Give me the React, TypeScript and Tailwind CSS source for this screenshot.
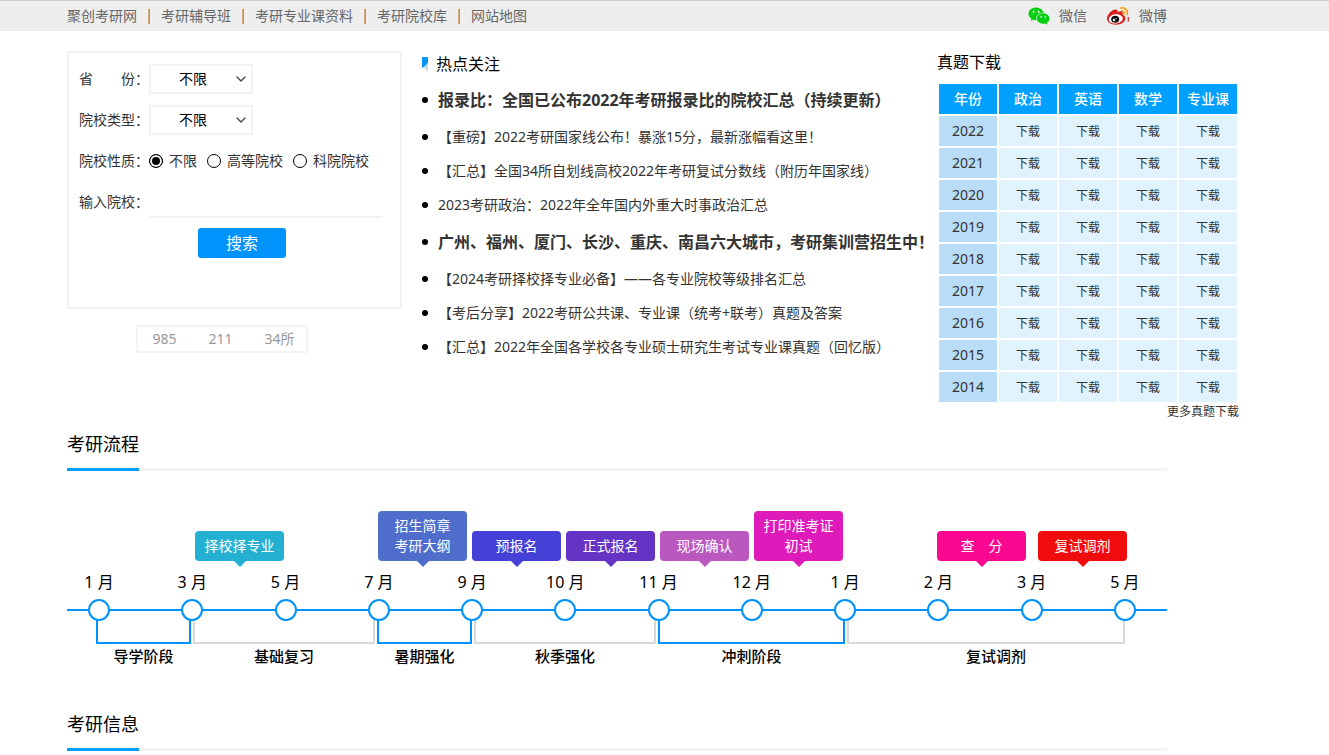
import clsx from 'clsx';
import { ChevronDown } from 'lucide-react';
import { AiFillWechat } from 'react-icons/ai';

const navLinks = ['聚创考研网', '考研辅导班', '考研专业课资料', '考研院校库', '网站地图'];

const schoolKinds = ['不限', '高等院校', '科院院校'];

const hotTopics = [
  { title: '报录比：全国已公布2022年考研报录比的院校汇总（持续更新）', top: true },
  { title: '【重磅】2022考研国家线公布！暴涨15分，最新涨幅看这里！' },
  { title: '【汇总】全国34所自划线高校2022年考研复试分数线（附历年国家线）' },
  { title: '2023考研政治：2022年全年国内外重大时事政治汇总' },
  { title: '广州、福州、厦门、长沙、重庆、南昌六大城市，考研集训营招生中！', top: true },
  { title: '【2024考研择校择专业必备】——各专业院校等级排名汇总' },
  { title: '【考后分享】2022考研公共课、专业课（统考+联考）真题及答案' },
  { title: '【汇总】2022年全国各学校各专业硕士研究生考试专业课真题（回忆版）' },
];

const subjects = ['政治', '英语', '数学', '专业课'];
const years = [2022, 2021, 2020, 2019, 2018, 2017, 2016, 2015, 2014];

const milestones = [
  { lines: ['择校择专业'], className: 'ml-32 text-[#24b1d1]' },
  { lines: ['招生简章', '考研大纲'], className: 'ml-[94px] text-[#4f6ecb]' },
  { lines: ['预报名'], className: 'ml-[5px] text-[#4540d6]' },
  { lines: ['正式报名'], className: 'ml-[5px] text-[#6534c4]' },
  { lines: ['现场确认'], className: 'ml-[5px] text-[#bb58c0]' },
  { lines: ['打印准考证', '初试'], className: 'ml-[5px] text-[#de1aba]' },
  { lines: ['查　分'], className: 'ml-[94px] text-[#fb0891]' },
  { lines: ['复试调剂'], className: 'ml-3 text-[#f00c0c]' },
];

const months = [1, 3, 5, 7, 9, 10, 11, 12, 1, 2, 3, 5];

const phases = [
  { name: '导学阶段', className: 'w-[95px]', active: true },
  { name: '基础复习', className: 'w-[182px]' },
  { name: '暑期强化', className: 'w-[95px]', active: true },
  { name: '秋季强化', className: 'w-[182px]' },
  { name: '冲刺阶段', className: 'w-[187px]', active: true },
  { name: '复试调剂', className: 'w-[278px]', labelClassName: 'pl-5' },
];

function WeiboIcon() {
  return (
    <svg viewBox="0 0 22 18" className="h-[18px] w-[22px]" aria-hidden="true">
      <path
        d="M8.400 2.400C5.300 2.200 0 7.200 0 11.600c0 3.900 4.200 6.200 9 6.200 5.700 0 9.400-3.300 9.400-6.500 0-2-1.300-3.100-2.800-3.500.6-1.900.2-3.200-1.200-3.500-1.100-.2-2.400.1-3.700.7.3-1.700-.3-2.500-2.300-2.600z"
        fill="#d81e1e"
      />
      <ellipse cx="8.800" cy="11.900" rx="7.100" ry="4.600" fill="#fff" transform="rotate(-6 8.800 11.900)" />
      <ellipse cx="8.200" cy="12.200" rx="4" ry="3.500" fill="#111" />
      <circle cx="7" cy="13" r="1.200" fill="#fff" />
      <circle cx="9.200" cy="11.500" r="0.600" fill="#fff" />
      <path d="M13.800 1c4.100-.9 7.400 2.500 6.500 6.600" fill="none" stroke="#f5a01a" strokeWidth="1.700" strokeLinecap="round" />
      <path d="M14.400 3.800c2-.4 3.500 1.200 3 3.100" fill="none" stroke="#f5a01a" strokeWidth="1.400" strokeLinecap="round" />
      <path d="M21.300 10v4.500" stroke="#e02020" strokeWidth="1.200" />
    </svg>
  );
}

function TopBar() {
  return (
    <header className="border-t border-[#ccc] bg-[#eee]">
      <div className="mx-auto max-w-[1195px] text-sm leading-[30px] text-[#666]">
        <div className="flex max-w-[1100px] items-center justify-between">
          <nav className="flex items-center">
            {navLinks.map((name, i) => (
              <div key={name} className="flex items-center">
                {i > 0 && <span className="mx-[11px] h-[15px] w-[2px] border-l border-[#d5a57a] bg-[#a09a94]" />}
                <a href="#">{name}</a>
              </div>
            ))}
          </nav>
          <div className="flex items-center gap-5">
            <a href="#" className="flex items-center gap-2">
              <AiFillWechat className="size-6 text-[#08cf13]" />
              微信
            </a>
            <a href="#" className="flex items-center gap-[10px]">
              <WeiboIcon />
              微博
            </a>
          </div>
        </div>
      </div>
    </header>
  );
}

function SelectField({ id, label }: { id: string; label: string }) {
  return (
    <div className="flex h-[41px] items-center">
      <label htmlFor={id} className="w-[70px]">{label}</label>
      <div className="relative">
        <select
          id={id}
          className="block h-[30px] w-[104px] appearance-none border-2 border-[#f3f3f3] bg-white pl-7 text-sm leading-5 text-black outline-none"
        >
          <option>不限</option>
        </select>
        <ChevronDown className="pointer-events-none absolute top-[7px] right-1 size-4 text-[#444]" strokeWidth={2} />
      </div>
    </div>
  );
}

function SchoolSearch() {
  return (
    <div className="w-[335px] shrink-0">
      <form className="border-2 border-[#f3f3f3] px-[10px] pt-[5px] pb-[49px] text-sm leading-5 text-[#333]">
        <SelectField id="province" label="省　　份：" />
        <SelectField id="type" label="院校类型：" />

        <fieldset className="flex h-[41px] items-center">
          <legend className="float-left w-[70px]">院校性质：</legend>
          <div className="flex gap-[10px]">
            {schoolKinds.map((kind, i) => (
              <label key={kind} className="flex items-center gap-[6px]">
                <input
                  type="radio"
                  name="kind"
                  defaultChecked={i === 0}
                  className="size-[14px] appearance-none rounded-full border border-black bg-white checked:bg-black checked:shadow-[inset_0_0_0_2px_white]"
                />
                {kind}
              </label>
            ))}
          </div>
        </fieldset>

        <div className="flex h-[41px] items-center">
          <label htmlFor="school" className="w-[70px]">输入院校：</label>
          <input id="school" type="text" className="h-8 w-[233px] border-b-2 border-[#f3f3f3] outline-none" />
        </div>

        <button type="button" className="mt-[6px] ml-[119px] block h-[30px] w-[88px] rounded-[3px] bg-[#0093fb] text-base text-white">
          搜索
        </button>
      </form>

      <div className="mt-4 ml-[69px] flex h-7 w-[172px] items-center justify-center gap-8 border-2 border-[#f3f3f3] pl-[3px] text-sm leading-5 text-[#999]">
        <a href="#">985</a>
        <a href="#">211</a>
        <a href="#">34所</a>
      </div>
    </div>
  );
}

function HotTopics() {
  return (
    <section className="ml-5 flex-1 whitespace-nowrap">
      <h2 className="mb-[3px] flex items-center gap-2 text-base leading-[26px] text-black">
        <svg viewBox="0 0 6 15" className="h-[15px] w-[6px]" aria-hidden="true">
          <path d="M6 7v8L1.500 10z" fill="#c9dbe6" />
          <path d="M1 0h4a1 1 0 0 1 1 1v3.500C6 7 3 9 0 11V1a1 1 0 0 1 1-1z" fill="#0093fb" />
        </svg>
        热点关注
      </h2>
      <ul>
        {hotTopics.map((topic) => (
          <li
            key={topic.title}
            className={clsx(
              'flex items-center gap-[10px] text-[#333] before:size-[6px] before:rounded-full before:bg-black',
              topic.top ? 'text-base leading-10 font-bold' : 'text-sm leading-[34px]',
            )}
          >
            <a href="#">{topic.title}</a>
          </li>
        ))}
      </ul>
    </section>
  );
}

function PaperDownloads() {
  return (
    <section className="w-[302px] shrink-0">
      <h2 className="mb-[9px] text-base leading-[22px] text-black">真题下载</h2>
      <table className="w-full table-fixed border-separate border-spacing-[2px] text-center text-[#333]">
        <thead>
          <tr className="text-sm leading-[30px] text-white">
            <th className="bg-[#00a0ff] p-0 font-medium">年份</th>
            {subjects.map((subject) => (
              <th key={subject} className="bg-[#00a0ff] p-0 font-medium">{subject}</th>
            ))}
          </tr>
        </thead>
        <tbody>
          {years.map((year) => (
            <tr key={year}>
              <td className="bg-[#b9ddf6] p-0 text-sm leading-[30px]">{year}</td>
              {subjects.map((subject) => (
                <td key={subject} className="bg-[#e1f3ff] p-0 pt-[2px] text-xs leading-7">
                  <a href="#" className="block">下载</a>
                </td>
              ))}
            </tr>
          ))}
        </tbody>
      </table>
      <a href="#" className="block text-right text-xs leading-4 text-[#333]">更多真题下载</a>
    </section>
  );
}

function SectionTitle({ children }: { children: string }) {
  return (
    <div className="flex border-b-[3px] border-[#f3f3f3]">
      <h2 className="-mb-[3px] border-b-[3px] border-[#00a0ff] text-lg leading-[48px] text-black">{children}</h2>
    </div>
  );
}

function Timeline() {
  return (
    <div className="pt-10 whitespace-nowrap">
      <ul className="flex items-end">
        {milestones.map(({ lines, className }) => (
          <li key={lines[0]} className={clsx('flex flex-col items-center', className)}>
            <div className="w-[89px] rounded bg-current py-[5px] text-center text-sm leading-5">
              {lines.map((line) => (
                <p key={line} className="text-white">{line}</p>
              ))}
            </div>
            <span className="border-x-[6px] border-t-[6px] border-x-transparent border-t-current" />
          </li>
        ))}
      </ul>

      <ol className="relative z-10 mt-[3px] -mb-3 flex justify-between pr-[18px] pl-2">
        {months.map((month, i) => (
          <li key={i} className="flex w-12 flex-col items-center gap-[5px] text-base leading-6 text-black">
            {month} 月
            <span className="size-[22px] rounded-full border-2 border-[#0093fb] bg-white" />
          </li>
        ))}
      </ol>

      {/* Axis line with the phase brackets hanging from it */}
      <ul className="flex gap-[2px] border-t-2 border-[#0093fb] pl-[29px]">
        {phases.map(({ name, className, labelClassName, active }) => (
          <li key={name} className={clsx('text-center text-[15px] leading-6 font-medium text-black', className)}>
            <div className={clsx('h-[33px] border-x-2 border-b-2', active ? 'border-[#0093fb]' : 'border-[#d9d9d9]')} />
            <p className={labelClassName}>{name}</p>
          </li>
        ))}
      </ul>
    </div>
  );
}

export default function App() {
  return (
    <div className="min-h-screen bg-white font-['Noto_Sans','Noto_Sans_CJK_SC',sans-serif]">
      <TopBar />
      <main className="mx-auto max-w-[1195px]">
        <div className="flex items-start pt-5 pr-[23px]">
          <SchoolSearch />
          <HotTopics />
          <PaperDownloads />
        </div>

        <section className="max-w-[1100px]">
          <SectionTitle>考研流程</SectionTitle>
          <Timeline />
        </section>

        <section className="mt-8 max-w-[1100px]">
          <SectionTitle>考研信息</SectionTitle>
        </section>
      </main>
    </div>
  );
}
